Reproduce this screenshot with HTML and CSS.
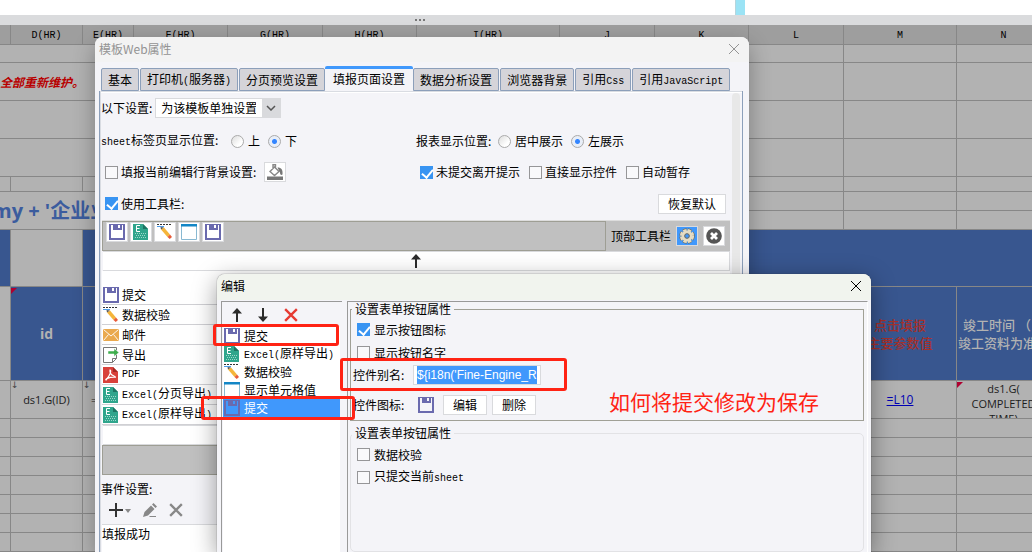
FILE: index.html
```html
<!DOCTYPE html>
<html lang="zh-CN">
<head>
<meta charset="utf-8">
<title>模板Web属性</title>
<link rel="stylesheet" href="styles.css">
</head>
<body>
<svg class="defs" aria-hidden="true">
  <symbol id="i-save" viewBox="0 0 16 16"><path fill="#6a6aae" fill-rule="evenodd" d="M0 0h16v16H0zM2 1v13h12V1h-1v5H4V1zM9 1v3h2V1z"/></symbol>
  <symbol id="i-excel" viewBox="0 0 16 16"><path fill="#2fa58c" d="M0 0h10l5 5v11H0z"/><path fill="#1c7563" d="M10 0v5h5z"/><path fill="none" stroke="#fff" d="M7 1.500H3.500v6H7M3.500 4.500h3"/><path stroke="#9bd8ca" stroke-dasharray="1 1" d="M2 9.500h11M3 11.500h10M2 13.500h11"/></symbol>
  <symbol id="i-check" viewBox="0 0 16 16"><path stroke="#333" stroke-dasharray="2 1" d="M0 .5h15"/><path stroke="#4c9be8" d="M0 2.500h7"/><path fill="#f5b53a" d="M4 5.500L7 3.500l6 7-2.500 2.500z"/><path fill="#555" d="M3.500 3l3.500.5L4 5.500z"/><path fill="#e85b3a" d="M13 10.500l2 2.500-2.300 2-2.200-2z"/></symbol>
  <symbol id="i-window" viewBox="0 0 16 16"><path fill="#fff" stroke="#89b9d2" d="M.5 1h15v14.500H.5z"/><path fill="#1386c6" d="M0 0h16v2.500H0z"/></symbol>
  <symbol id="i-mail" viewBox="0 0 16 16"><path fill="#eaa94e" d="M0 2h16v12H0z"/><path fill="none" stroke="#fff" stroke-width=".9" d="M.5 2.500L8 9l7.500-6.500M.5 13.500l5-6M15.500 13.500l-5-6"/></symbol>
  <symbol id="i-export" viewBox="0 0 16 16"><path fill="#fff" stroke="#777" d="M.5.500h13v11l-4 4h-9zM13.500 11.500h-4v4"/><path fill="#3fae4e" stroke="#fff" stroke-width=".5" d="M5 4h6V1.500L16 5.500 11 9.500V7H5z"/></symbol>
  <symbol id="i-pdf" viewBox="0 0 16 16"><path fill="#d8403a" d="M0 0h10l5 5v11H0z"/><path fill="#a32823" d="M10 0v5h5z"/><path fill="none" stroke="#fff" stroke-width="1.200" d="M7 3c1.500 0 .6 5-4 10-1.200-.3 2-3.200 9.500-2.800C13 8.500 6 9.500 7 3z"/></symbol>
  <symbol id="i-up" viewBox="0 0 10 14"><path fill="#2b2b2b" d="M5 0l5 5.500H6V14H4V5.500H0z"/></symbol>
  <symbol id="i-down" viewBox="0 0 10 14"><path fill="#2b2b2b" d="M5 14l5-5.500H6V0H4v8.500H0z"/></symbol>
  <symbol id="i-x" viewBox="0 0 12 12"><path fill="none" stroke="currentColor" d="M1 1l10 10M11 1L1 11"/></symbol>
  <symbol id="i-bucket" viewBox="0 0 16 16"><path fill="#777" d="M0 12.500h16V16H0z"/><path fill="none" stroke="#888" stroke-width="1.400" d="M3 7.500l4.500-4.500 4.500 4.500-4.500 4zM6 5V.7h2.500V5"/><path fill="#777" d="M10.500 3.500c4 0 5.500 2.500 5 7-1.500 1-2.500 0-2.500-2z"/></symbol>
  <symbol id="i-gear" viewBox="0 0 16 16"><circle cx="8" cy="8" r="6" fill="none" stroke="#756c54" stroke-width="3.500" stroke-dasharray="3.700 1.010"/><circle cx="8" cy="8" r="5.700" fill="none" stroke="#e4dcc4" stroke-width="2.800" stroke-dasharray="3.300 1.180"/><circle cx="8" cy="8" r="4" fill="none" stroke="#e4dcc4" stroke-width="3"/><circle cx="8" cy="8" r="2.300" fill="#4098fc" stroke="#756c54"/></symbol>
  <symbol id="i-close" viewBox="0 0 16 16"><circle cx="8" cy="8" r="7.800" fill="#555"/><path stroke="#fff" stroke-width="2.800" d="M5 5l6 6M11 5l-6 6"/></symbol>
  <symbol id="i-plus" viewBox="0 0 22 14"><path stroke="#333" stroke-width="2" d="M7 0v14M0 7h14"/><path fill="#888" d="M16 6h6l-3 4z"/></symbol>
  <symbol id="i-pencil" viewBox="0 0 14 14"><path fill="#888" d="M0 14l1.500-5L8 2.500l3.500 3.500L5 12.500zM9 1.500L10.500 0 14 3.500 12.500 5zM7 13h6v1H6z"/></symbol>
</svg>

<main class="designer">
  <div class="preview"><i class="preview-mark"></i></div>
  <div class="splitter"><i></i><i></i><i></i></div>
  <div class="sheet-view">
  <table class="sheet">
    <colgroup><col class="c0"><col class="cd"><col class="ce"><col class="cf"><col class="cg"><col class="cf"><col class="ci"><col class="cg"><col class="cf"><col class="cg"><col class="cm"><col class="cf"></colgroup>
    <thead><tr><th></th><th>D(HR)</th><th>E(HR)</th><th>F(HR)</th><th>G(HR)</th><th>H(HR)</th><th>I(HR)</th><th>J</th><th>K</th><th>L</th><th>M</th><th>N</th></tr></thead>
    <tbody>
      <tr class="r18"><td colspan="9"></td><td></td><td></td><td></td></tr>
      <tr class="r38"><td colspan="9" class="notice">全部重新维护。</td><td></td><td></td><td></td></tr>
      <tr class="r38"><td colspan="9"></td><td></td><td></td><td></td></tr>
      <tr class="r38"><td colspan="9"></td><td></td><td></td><td></td></tr>
      <tr class="r15"><td></td><td></td><td></td><td colspan="6"></td><td></td><td></td><td></td></tr>
      <tr class="r19"><td colspan="9" rowspan="2" class="headline">my + '企业业</td><td></td><td></td><td></td></tr>
      <tr class="r19"><td></td><td></td><td></td></tr>
      <tr class="r57"><td class="blue"></td><td></td><td class="blue" colspan="10"></td></tr>
      <tr class="r94"><td></td><td class="blue id marked">id</td><td class="blue"></td><td class="blue" colspan="7"></td><td class="blue key">点击填报<br>主要参数值</td><td class="blue done">竣工时间&nbsp;（以<br>竣工资料为准）</td></tr>
      <tr class="r38 data"><td></td><td class="arrow">ds1.G(ID)</td><td class="arrow eq">=</td><td colspan="7"></td><td><a href="#l10">=L10</a></td><td class="marked"><div class="clip">ds1.G(<br>COMPLETED<br>TIME)</div></td></tr>
      <tr class="r19"><td></td><td></td><td></td><td></td><td></td><td></td><td></td><td></td><td></td><td></td><td></td><td></td></tr>
      <tr class="r19"><td></td><td></td><td></td><td></td><td></td><td></td><td></td><td></td><td></td><td></td><td></td><td></td></tr>
      <tr class="r19"><td></td><td></td><td></td><td></td><td></td><td></td><td></td><td></td><td></td><td></td><td></td><td></td></tr>
      <tr class="r19"><td></td><td></td><td></td><td></td><td></td><td></td><td></td><td></td><td></td><td></td><td></td><td></td></tr>
      <tr class="r19"><td></td><td></td><td></td><td></td><td></td><td></td><td></td><td></td><td></td><td></td><td></td><td></td></tr>
      <tr class="r19"><td></td><td></td><td></td><td></td><td></td><td></td><td></td><td></td><td></td><td></td><td></td><td></td></tr>
      <tr class="r19"><td></td><td></td><td></td><td></td><td></td><td></td><td></td><td></td><td></td><td></td><td></td><td></td></tr>
    </tbody>
  </table>
  </div>
</main>

<section class="window props" aria-label="模板Web属性">
  <header class="titlebar muted"><span>模板Web属性</span><button class="plain" aria-label="关闭"><svg class="s12"><use href="#i-x"/></svg></button></header>
  <nav class="tabs">
    <button>基本</button><button>打印机<span class="lat">(</span>服务器<span class="lat">)</span></button><button>分页预览设置</button><button class="active">填报页面设置</button><button>数据分析设置</button><button>浏览器背景</button><button>引用<span class="lat">Css</span></button><button>引用<span class="lat">JavaScript</span></button>
  </nav>
  <div class="panel">
    <div class="content">
      <div class="line scope"><label for="scope">以下设置:</label>
        <span class="select"><select id="scope"><option>为该模板单独设置</option></select><svg viewBox="0 0 10 6"><path fill="none" stroke="#555" stroke-width="1.500" d="M1 1l4 4 4-4"/></svg></span></div>
      <div class="pair">
        <div class="line radios"><span class="w-sheet"><span class="lat">sheet</span>标签页显示位置:</span><label><input type="radio" name="tabpos">上</label><label><input type="radio" name="tabpos" checked>下</label></div>
        <div class="line radios"><span class="w-report">报表显示位置:</span><label><input type="radio" name="report">居中展示</label><label><input type="radio" name="report" checked>左展示</label></div>
      </div>
      <div class="pair">
        <div class="line checks"><label><input type="checkbox">填报当前编辑行背景设置:</label><button class="tool" aria-label="背景颜色"><svg class="s16"><use href="#i-bucket"/></svg></button></div>
        <div class="line checks"><label><input type="checkbox" checked>未提交离开提示</label><label><input type="checkbox">直接显示控件</label><label><input type="checkbox">自动暂存</label></div>
      </div>
      <div class="line checks between"><label><input type="checkbox" checked>使用工具栏:</label><button class="btn reset">恢复默认</button></div>
      <div class="bar">
        <div class="bar-tools">
          <button class="tool" aria-label="提交"><svg class="s16"><use href="#i-save"/></svg></button><button class="tool" aria-label="Excel"><svg class="s16"><use href="#i-excel"/></svg></button><button class="tool" aria-label="数据校验"><svg class="s16"><use href="#i-check"/></svg></button><button class="tool" aria-label="显示单元格值"><svg class="s16"><use href="#i-window"/></svg></button><button class="tool" aria-label="提交"><svg class="s16"><use href="#i-save"/></svg></button>
        </div>
        <div class="bar-side"><span>顶部工具栏</span><button class="tool on" aria-label="编辑工具栏"><svg class="s16"><use href="#i-gear"/></svg></button><button class="tool" aria-label="清空"><svg class="s16"><use href="#i-close"/></svg></button></div>
      </div>
      <div class="strip"><svg class="arrow-icon"><use href="#i-up"/></svg></div>
      <ul class="widgets">
        <li><svg class="s16"><use href="#i-save"/></svg>提交</li>
        <li><svg class="s16"><use href="#i-check"/></svg>数据校验</li>
        <li><svg class="s16"><use href="#i-mail"/></svg>邮件</li>
        <li><svg class="s16"><use href="#i-export"/></svg>导出</li>
        <li><svg class="s16"><use href="#i-pdf"/></svg><span class="lat">PDF</span></li>
        <li><svg class="s16"><use href="#i-excel"/></svg><span><span class="lat">Excel(</span>分页导出<span class="lat">)</span></span></li>
        <li><svg class="s16"><use href="#i-excel"/></svg><span><span class="lat">Excel(</span>原样导出<span class="lat">)</span></span></li>
      </ul>
      <div class="strip"></div>
      <div class="bar bottom"></div>
      <div class="events-label">事件设置:</div>
      <div class="events-tools"><button class="plain" aria-label="添加"><svg class="plus"><use href="#i-plus"/></svg></button><button class="plain" aria-label="编辑"><svg class="s14"><use href="#i-pencil"/></svg></button><button class="plain bold" aria-label="删除"><svg class="s14"><use href="#i-x"/></svg></button></div>
      <div class="events">填报成功</div>
    </div>
    <div class="scroll"></div>
  </div>
</section>

<section class="window editor" aria-label="编辑">
  <header class="titlebar"><span>编辑</span><button class="plain" aria-label="关闭"><svg class="s12"><use href="#i-x"/></svg></button></header>
  <div class="editor-body">
    <div class="side">
      <div class="side-tools"><button class="plain" aria-label="上移"><svg class="arrow-icon"><use href="#i-up"/></svg></button><button class="plain" aria-label="下移"><svg class="arrow-icon"><use href="#i-down"/></svg></button><button class="plain red" aria-label="删除"><svg class="s14"><use href="#i-x"/></svg></button></div>
      <ul class="items">
        <li><svg class="s16"><use href="#i-save"/></svg>提交</li>
        <li><svg class="s16"><use href="#i-excel"/></svg><span><span class="lat">Excel(</span>原样导出<span class="lat">)</span></span></li>
        <li><svg class="s16"><use href="#i-check"/></svg>数据校验</li>
        <li><svg class="s16"><use href="#i-window"/></svg>显示单元格值</li>
        <li class="selected"><svg class="s16"><use href="#i-save"/></svg>提交</li>
      </ul>
    </div>
    <div class="form">
      <fieldset class="group first"><legend>设置表单按钮属性</legend>
        <label class="tick"><input type="checkbox" checked>显示按钮图标</label>
        <label class="tick"><input type="checkbox">显示按钮名字</label>
        <div class="field alias"><label for="alias">控件别名:</label><div class="textbox"><input id="alias" type="text" value="${i18n('Fine-Engine_Report_Submit')}"></div></div>
        <div class="field icon-field"><span>控件图标:</span><svg class="s16"><use href="#i-save"/></svg><button class="btn">编辑</button><button class="btn">删除</button></div>
      </fieldset>
      <fieldset class="group second"><legend>设置表单按钮属性</legend>
        <label class="tick"><input type="checkbox">数据校验</label>
        <label class="tick"><input type="checkbox"><span>只提交当前<span class="lat">sheet</span></span></label>
      </fieldset>
    </div>
  </div>
</section>

<div class="mark mark-a"></div>
<div class="mark mark-b"></div>
<div class="mark mark-c"></div>
<p class="question">如何将提交修改为保存</p>
</body>
</html>
```
FILE: styles.css
```css
* { box-sizing: border-box; }
body {
  margin: 0;
  height: 100vh;
  overflow: hidden;
  position: relative;
  background: #b2b2b2;
  color: #000;
  font: 12px/18px "Noto Sans CJK SC", sans-serif;
}
button, input, select { font: inherit; color: inherit; margin: 0; }
ul { list-style: none; margin: 0; padding: 0; }
.defs { position: absolute; width: 0; height: 0; }
.lat { font-family: "Liberation Mono", monospace; font-size: 10px; }
svg { display: block; flex: none; }
.s12 { width: 12px; height: 12px; }
.s14 { width: 14px; height: 14px; }
.s16 { width: 16px; height: 16px; }
.arrow-icon { width: 10px; height: 14px; }
.plus { width: 22px; height: 14px; }

/* Spreadsheet behind the windows */
.preview { height: 15px; background: #fff; }
.preview-mark { display: block; width: 10px; height: 15px; margin-left: 735px; background: #9be3f5; border-left: 1px solid #b5d5dd; }
.splitter { height: 10px; background: #dadbdd; display: flex; justify-content: center; align-items: center; gap: 2px; padding-right: 192px; }
.splitter i { width: 2px; height: 2px; background: #777; }
.sheet-view { overflow: hidden; }
.sheet { width: 1051px; table-layout: fixed; border-collapse: separate; border-spacing: 0; }
.c0 { width: 11px; } .cd { width: 72px; } .ce { width: 51px; } .cf { width: 94px; }
.cg { width: 95px; } .ci { width: 143px; } .cm { width: 113px; }
.sheet th { height: 20px; padding: 2px 0 0; background: #9e9e9e; border: solid #878787; border-width: 0 1px 1px 0; font: 10px/16px "Liberation Mono", monospace; }
.sheet td { padding: 0; border: solid #878787; border-width: 0 1px 1px 0; text-align: center; position: relative; overflow: hidden; white-space: nowrap; }
.r15 td { height: 15px; } .r18 td { height: 18px; } .r19 td { height: 19px; }
.r38 td { height: 38px; } .r57 td { height: 57px; } .r94 td { height: 94px; }
.sheet .blue { background: #38568f; }
.sheet .notice { text-align: left; color: #b80000; font-weight: bold; font-style: italic; }
.sheet .headline { text-align: left; text-indent: -8px; color: #3b5c9e; font: bold 20px/24px "Open Sans", "Noto Sans CJK SC", sans-serif; }
.sheet .id { color: #b2b2b2; font: bold 14px/18px "Open Sans", sans-serif; }
.sheet .key { color: #a4302b; font-size: 13px; font-weight: 500; }
.sheet .done { color: #b2b2b2; font-size: 13px; font-weight: 500; }
.sheet .key, .sheet .done { line-height: 18px; }
.data td { font: 11px/15px "Open Sans", sans-serif; color: #1c1c1c; }
.data a { color: #0000b4; font-size: 12px; }
.clip { height: 37px; overflow: hidden; }
.sheet .eq { text-align: left; padding-left: 8px; }
.marked::before { content: ""; position: absolute; left: 0; top: 1px; border: solid transparent; border-width: 0 6px 6px 0; border-left: 0; border-top: 6px solid #b00030; border-bottom: 0; }
.arrow::before { content: "↓"; position: absolute; left: 0; top: 0; font: 9px/8px "DejaVu Sans", sans-serif; color: #444; }

/* Windows */
.window { position: absolute; bottom: 0; width: 654px; background: #f4f4f8; border-radius: 8px 8px 0 0; overflow: hidden; display: flex; flex-direction: column; }
.props { left: 95px; top: 37px; box-shadow: 0 8px 22px rgba(0,0,0,.3); }
.editor { left: 217px; top: 274px; box-shadow: 0 6px 24px rgba(0,0,0,.4), 0 0 1px #333; }
.titlebar { height: 26px; flex: none; display: flex; justify-content: space-between; align-items: center; padding: 0 9px 2px 4px; background: #f1f4ee; }
.titlebar.muted { height: 25px; background: #f3f3f3; color: #949494; }
.plain { border: 0; padding: 0; background: none; }
.red { color: #e63a32; }
.red svg, .bold svg { stroke-width: 2px; }
.bold { color: #888; }
.btn { height: 20px; padding: 0 8px; border: 1px solid #d9dadd; background: #fff; line-height: 16px; }
.reset { width: 68px; }

.tabs { display: flex; align-items: flex-end; height: 29px; flex: none; padding: 0 6px; gap: 1px; }
.tabs button { height: 23px; padding: 0 6px; border: 1px solid #8c9fba; background: #d5d4d9; border-radius: 2px 2px 0 0; line-height: 20px; white-space: nowrap; }
.tabs .active { height: 25px; margin: 0 -1px; padding: 0 8px 3px; border: 0; border-top: 3px solid #4098fc; background: #f4f4f8; align-self: flex-end; }
.panel { flex: 1; margin: 0 6px 0 4px; border: solid #8c9fba; border-width: 0 1px 0 1px; box-shadow: inset 1px 1px #d9dce2, inset 0 2px #fff; display: flex; justify-content: space-between; padding: 0 2px 0 1px; min-height: 0; }
.content { flex: 1; }
.scroll { width: 8px; margin: 2px 0 0 2px; border-radius: 4px; background: #e8e8e8; }
.line { display: flex; align-items: center; height: 30px; white-space: nowrap; }
.line label, .tick { display: flex; align-items: center; }
.scope { height: 34px; gap: 3px; }
.select { position: relative; display: block; }
.select select { display: block; width: 126px; height: 20px; appearance: none; padding: 0 6px 0 5px; line-height: 18px; border: 1px solid #d9dadd; border-right: 19px solid #d9dadd; border-radius: 0; background: #fff; }
.select svg { position: absolute; right: 5px; top: 7px; width: 10px; height: 6px; pointer-events: none; }
.pair { display: grid; grid-template-columns: 315px 1fr; }
.radios { height: 32px; }
.radios label { gap: 4px; margin-right: 8px; }
.w-sheet { width: 130px; }
.w-report { width: 82px; flex: none; }
.checks { padding-left: 4px; }
.checks label { gap: 3px; margin-right: 9px; }
.checks .tool { margin-left: -1px; }
.between { height: 33px; justify-content: space-between; padding-right: 4px; }
input[type="radio"] { appearance: none; flex: none; width: 13px; height: 13px; border: 1px solid #aaa; border-radius: 50%; background: linear-gradient(135deg, #ddd, #fff 70%); }
input[type="radio"]:checked { background: radial-gradient(circle, #3385ff 0 2px, #e8eef8 3px); }
input[type="checkbox"] { appearance: none; width: 13px; height: 13px; border: 1px solid #969698; background: #f9f9fb; display: block; flex: none; }
input[type="checkbox"]:checked { border-color: #3894f2; background: #3894f2; }
input[type="checkbox"]:checked::before { content: ""; display: block; width: 5px; height: 9px; margin: 0 3px; border: solid #fff; border-width: 0 2px 2px 0; transform: rotate(40deg); }
.tool { width: 22px; height: 20px; padding: 0; border: 1px solid #d9dadd; background: #fff; display: flex; align-items: center; justify-content: center; }
.tool.on { background: #4098fc; }
.bar { display: flex; height: 31px; margin-left: 1px; background: #c0c0c0; border-top: 1px solid #ddd; }
.bar-tools { flex: 1; display: flex; gap: 2px; padding: 0 3px; border: 1px solid #9e9e94; }
.bar-side { display: flex; align-items: center; gap: 5px; padding: 0 5px; }
.bar.bottom { border: 1px solid #9e9e94; height: 30px; }
.strip { height: 20px; margin-left: 2px; background: #fff; border: solid #d9dadd; border-width: 1px 1px 1px 0; display: flex; align-items: center; justify-content: center; }
.widgets { padding-top: 14px; background: #fff; margin-left: 1px; }
.widgets li { display: flex; align-items: center; gap: 3px; height: 20px; padding-left: 1px; border-bottom: 1px solid #d0d0d4; }
.events-label { height: 28px; line-height: 28px; }
.events-tools { display: flex; align-items: center; gap: 12px; height: 14px; padding-left: 8px; margin-bottom: 7px; }
.events { background: #fff; border-top: 1px solid #d9dadd; margin-left: 1px; height: 80px; }

.editor-body { display: grid; grid-template-columns: 121px 1fr; gap: 5px; padding: 1px 3px 0 4px; flex: 1; }
.side { border: solid #999; border-width: 1px 0 0 1px; background: #f4f4f8; display: flex; flex-direction: column; padding: 0 2px 0 1px; }
.side-tools { height: 25px; display: flex; align-items: center; gap: 16px; padding-left: 9px; }
.items { flex: 1; background: #fff; }
.items li { display: flex; align-items: center; gap: 4px; height: 18px; padding-left: 1px; white-space: nowrap; }
.items .selected { background: #4098fc; color: #fff; }
.form { border: solid #999; border-width: 1px 1px 0 1px; border-right-color: #fff; padding: 0 3px 0 2px; display: flex; flex-direction: column; }
.group { border: 0; margin: 0; padding: 0 0 0 2px; min-width: 0; position: relative; }
.group legend { padding: 0 3px; height: 16px; line-height: 14px; background: #f4f4f8; position: relative; z-index: 1; }
.group::before { content: ""; position: absolute; inset: -9px 0 0; border: 1px solid #a0a096; pointer-events: none; }
.first { height: 122px; }
.first::before { bottom: -1px; }
.second { flex: 1; margin-top: 2px; }
.second::before { border-color: #e2e2e5; border-radius: 5px; }
.tick { height: 23px; gap: 4px; padding-left: 5px; position: relative; }
.second .tick:first-of-type { margin-top: 1px; }
.field { display: flex; align-items: center; height: 30px; padding-left: 1px; position: relative; }
.alias { height: 22px; }
.icon-field { margin-top: 4px; }
.field > :first-child { width: 60px; }
.field svg { margin: 0 9px 0 5px; }
.field .btn { width: 44px; margin-right: 5px; }
.textbox { width: 128px; height: 20px; border: 1px solid #d9dadd; background: #fff; padding: 0 3px; }
.textbox input { display: block; width: 100%; height: 18px; padding: 0; border: 0; background: #4098fc; color: #fff; font: 12px/18px "Liberation Sans", sans-serif; }

/* Annotations drawn over the windows */
.mark { position: absolute; border: 3px solid #ff2314; border-radius: 3px; }
.mark-a { left: 213px; top: 324px; width: 126px; height: 22px; }
.mark-b { left: 201px; top: 396px; width: 154px; height: 24px; }
.mark-c { left: 340px; top: 358px; width: 227px; height: 33px; }
.question { position: absolute; left: 609px; top: 386px; margin: 0; font-size: 21px; line-height: 30px; color: #ff2314; white-space: nowrap; }
```
